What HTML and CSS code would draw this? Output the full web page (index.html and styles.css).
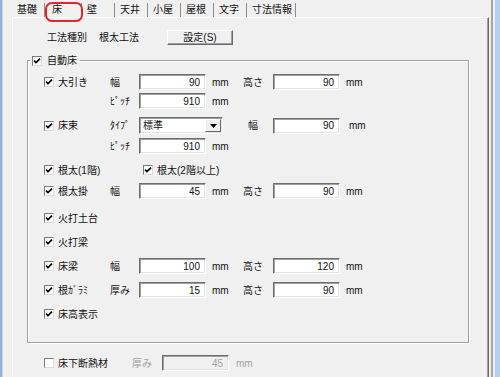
FILE: index.html
```html
<!DOCTYPE html>
<html lang="ja">
<head>
    <meta charset="UTF-8">
    <title>床 設定</title>
    <link rel="stylesheet" href="styles.css">
</head>
<body>
    <div class="screen">
        <div class="edge-left"></div>

        <div class="dialog">
            <div class="tabs">
                <div class="tab">基礎</div>
                <div class="tab active">床<span class="mark"></span></div>
                <div class="tab">壁</div>
                <div class="tab">天井</div>
                <div class="tab">小屋</div>
                <div class="tab">屋根</div>
                <div class="tab">文字</div>
                <div class="tab long">寸法情報</div>
            </div>

            <div class="panel">
                <div class="method-row">
                    <span class="method-label">工法種別</span>
                    <span class="method-value">根太工法</span>
                    <button class="btn">設定(S)</button>
                </div>

                <fieldset class="group">
                    <legend class="group-title">
                        <span class="check on"><svg viewBox="0 0 8 8"><polyline points="1,3.6 3,5.6 7,1.6"/></svg></span>
                        <span>自動床</span>
                    </legend>

                    <div class="rows">
                        <div class="row">
                            <label class="item"><span class="check on"><svg viewBox="0 0 8 8"><polyline points="1,3.6 3,5.6 7,1.6"/></svg></span>大引き</label>
                            <span class="lbl">幅</span>
                            <input class="num" value="90" readonly>
                            <span class="unit">mm</span>
                            <span class="lbl">高さ</span>
                            <input class="num" value="90" readonly>
                            <span class="unit">mm</span>
                        </div>
                        <div class="row tight">
                            <span></span>
                            <span class="lbl">ﾋﾟｯﾁ</span>
                            <input class="num" value="910" readonly>
                            <span class="unit">mm</span>
                        </div>
                        <div class="row">
                            <label class="item"><span class="check on"><svg viewBox="0 0 8 8"><polyline points="1,3.6 3,5.6 7,1.6"/></svg></span>床束</label>
                            <span class="lbl">ﾀｲﾌﾟ</span>
                            <div class="combo">
                                <span class="combo-text">標準</span>
                                <span class="combo-btn"><svg viewBox="0 0 7 4"><polygon points="0,0 7,0 3.5,4"/></svg></span>
                            </div>
                            <span class="lbl narrow">幅</span>
                            <input class="num" value="90" readonly>
                            <span class="unit wide">mm</span>
                        </div>
                        <div class="row close">
                            <span></span>
                            <span class="lbl">ﾋﾟｯﾁ</span>
                            <input class="num" value="910" readonly>
                            <span class="unit">mm</span>
                        </div>
                        <div class="row">
                            <label class="item"><span class="check on"><svg viewBox="0 0 8 8"><polyline points="1,3.6 3,5.6 7,1.6"/></svg></span>根太(1階)</label>
                            <label class="item second"><span class="check on"><svg viewBox="0 0 8 8"><polyline points="1,3.6 3,5.6 7,1.6"/></svg></span>根太(2階以上)</label>
                        </div>
                        <div class="row close">
                            <label class="item"><span class="check on"><svg viewBox="0 0 8 8"><polyline points="1,3.6 3,5.6 7,1.6"/></svg></span>根太掛</label>
                            <span class="lbl">幅</span>
                            <input class="num" value="45" readonly>
                            <span class="unit">mm</span>
                            <span class="lbl">高さ</span>
                            <input class="num" value="90" readonly>
                            <span class="unit">mm</span>
                        </div>
                        <div class="row loose">
                            <label class="item"><span class="check on"><svg viewBox="0 0 8 8"><polyline points="1,3.6 3,5.6 7,1.6"/></svg></span>火打土台</label>
                        </div>
                        <div class="row">
                            <label class="item"><span class="check on"><svg viewBox="0 0 8 8"><polyline points="1,3.6 3,5.6 7,1.6"/></svg></span>火打梁</label>
                        </div>
                        <div class="row">
                            <label class="item"><span class="check on"><svg viewBox="0 0 8 8"><polyline points="1,3.6 3,5.6 7,1.6"/></svg></span>床梁</label>
                            <span class="lbl">幅</span>
                            <input class="num" value="100" readonly>
                            <span class="unit">mm</span>
                            <span class="lbl">高さ</span>
                            <input class="num" value="120" readonly>
                            <span class="unit">mm</span>
                        </div>
                        <div class="row">
                            <label class="item"><span class="check on"><svg viewBox="0 0 8 8"><polyline points="1,3.6 3,5.6 7,1.6"/></svg></span>根ｶﾞﾗﾐ</label>
                            <span class="lbl">厚み</span>
                            <input class="num" value="15" readonly>
                            <span class="unit">mm</span>
                            <span class="lbl">高さ</span>
                            <input class="num" value="90" readonly>
                            <span class="unit">mm</span>
                        </div>
                        <div class="row">
                            <label class="item"><span class="check on"><svg viewBox="0 0 8 8"><polyline points="1,3.6 3,5.6 7,1.6"/></svg></span>床高表示</label>
                        </div>
                    </div>
                </fieldset>

                <div class="insulation-row">
                    <label class="item"><span class="check"></span>床下断熱材</label>
                    <span class="dim-label">厚み</span>
                    <input class="num" value="45" disabled>
                    <span class="dim-unit">mm</span>
                </div>
            </div>
        </div>

        <div class="edge-right">
            <div class="edge-right-blue"></div>
        </div>
    </div>
</body>
</html>
```

FILE: styles.css
```css
:root {
    --face: #f0f0f0;
    --shadow: #a0a0a0;
    --dark: #696969;
    --light: #e3e3e3;
    --disabled: #a0a0a0;
}

* {
    box-sizing: border-box;
}

body {
    margin: 0;
    background: var(--face);
    font-family: "Liberation Sans", "Noto Sans CJK JP", sans-serif;
    font-size: 10px;
    line-height: 13px;
    color: #111;
}

.screen {
    display: flex;
    height: 377px;
    overflow: hidden;
}

.edge-left {
    flex: none;
    width: 3px;
    background: #8fb3dd;
    border-right: 1px solid #d4d4d4;
}

.dialog {
    flex: 1;
    min-width: 0;
    display: flex;
    flex-direction: column;
    padding: 0 2px 0 9px;
}

/* tabs */
.tabs {
    display: flex;
    align-items: flex-end;
    flex: none;
    height: 17px;
}

.tab {
    position: relative;
    flex: none;
    width: 33px;
    height: 14px;
    padding-left: 5px;
    line-height: 14px;
    white-space: nowrap;
    border-right: 1px solid #8c8c8c;
}

.tab.active {
    width: 37px;
    padding-left: 7px;
}

.tab.long {
    width: 49px;
}

.tab .mark {
    position: absolute;
    left: 0;
    top: -1px;
    width: 38px;
    height: 20px;
    border: 2px solid #e3262b;
    border-radius: 7px;
}

/* panel */
.panel {
    flex: 1;
    border-top: 1px solid #fff;
    border-left: 1px solid #fff;
    border-right: 1px solid var(--dark);
    box-shadow: inset -1px 0 0 var(--shadow);
    padding-top: 12px;
}

.method-row {
    display: flex;
    align-items: center;
    height: 15px;
    padding-left: 34px;
}

.method-label {
    margin-right: 12px;
}

.btn {
    margin-left: 28px;
    width: 66px;
    height: 15px;
    padding: 0;
    font: inherit;
    line-height: 11px;
    color: inherit;
    background: var(--face);
    border: 1px solid;
    border-color: #fff var(--dark) var(--dark) #fff;
    box-shadow: inset -1px -1px 0 var(--shadow);
}

/* group box */
.group {
    margin: 9px 19px 0 14px;
    padding: 0 0 20px 2px;
    min-width: 0;
    border: 1px solid var(--shadow);
    box-shadow: 1px 1px 0 #fff, inset 1px 1px 0 #fff;
}

.group-title {
    display: flex;
    align-items: center;
    gap: 5px;
    padding: 0 3px 0 2px;
    background: var(--face);
}

.rows {
    padding: 7px 0 0 14px;
}

.row {
    display: grid;
    grid-template-columns: 66px 29px 67px 37px 30px 67px auto;
    align-items: center;
    height: 16px;
    margin-top: 8px;
}

.row:first-child {
    margin-top: 0;
}

.row.tight {
    margin-top: 3px;
}

.row.close {
    margin-top: 5px;
}

.row.loose {
    margin-top: 11px;
}

.item {
    display: flex;
    align-items: center;
    gap: 4px;
    white-space: nowrap;
}

.item.second {
    grid-column: 3 / span 4;
    padding-left: 4px;
}

.lbl.narrow {
    padding-left: 5px;
}

.unit {
    padding-left: 6px;
}

.unit.wide {
    padding-left: 9px;
}

/* controls */
.check {
    display: inline-flex;
    flex: none;
    align-items: center;
    justify-content: center;
    width: 10px;
    height: 10px;
    background: #fff;
    border: 1px solid;
    border-color: #7b7b7b #dcdcdc #dcdcdc #7b7b7b;
}

.check svg {
    width: 8px;
    height: 8px;
    fill: none;
    stroke: #000;
    stroke-width: 1.7;
}

.num {
    -webkit-appearance: none;
    appearance: none;
    width: 67px;
    height: 16px;
    padding: 0 5px 0 0;
    margin: 0;
    font: inherit;
    line-height: 14px;
    text-align: right;
    color: #111;
    background: #fff;
    border: 1px solid;
    border-color: #6d6d6d #fff #fff #6d6d6d;
    box-shadow: inset 1px 1px 0 var(--shadow), inset -1px -1px 0 var(--light);
    outline: none;
}

.num:disabled {
    color: var(--disabled);
    -webkit-text-fill-color: var(--disabled);
    background: var(--face);
    opacity: 1;
}

.combo {
    grid-column: 3 / span 2;
    display: flex;
    align-items: center;
    width: 84px;
    height: 17px;
    background: #fff;
    border: 1px solid;
    border-color: #6d6d6d #fff #fff #6d6d6d;
    box-shadow: inset 1px 1px 0 var(--shadow), inset -1px -1px 0 var(--light);
}

.combo-text {
    flex: 1;
    padding-left: 3px;
}

.combo-btn {
    display: flex;
    align-items: center;
    justify-content: center;
    width: 16px;
    height: 13px;
    margin-right: 1px;
    background: var(--face);
    border: 1px solid;
    border-color: #fff var(--dark) var(--dark) #fff;
}

.combo-btn svg {
    width: 7px;
    height: 4px;
    fill: #000;
}

/* bottom row */
.insulation-row {
    display: flex;
    align-items: center;
    height: 16px;
    margin: 12px 0 0 31px;
}

.dim-label {
    margin: 0 10px 0 24px;
    color: var(--disabled);
}

.dim-unit {
    margin-left: 7px;
    color: var(--disabled);
}

/* window frame */
.edge-right {
    flex: none;
    display: flex;
    border-left: 2px solid #a5a5a5;
    padding-left: 2px;
}

.edge-right-blue {
    width: 5px;
    background: #b7cfea;
}
```
